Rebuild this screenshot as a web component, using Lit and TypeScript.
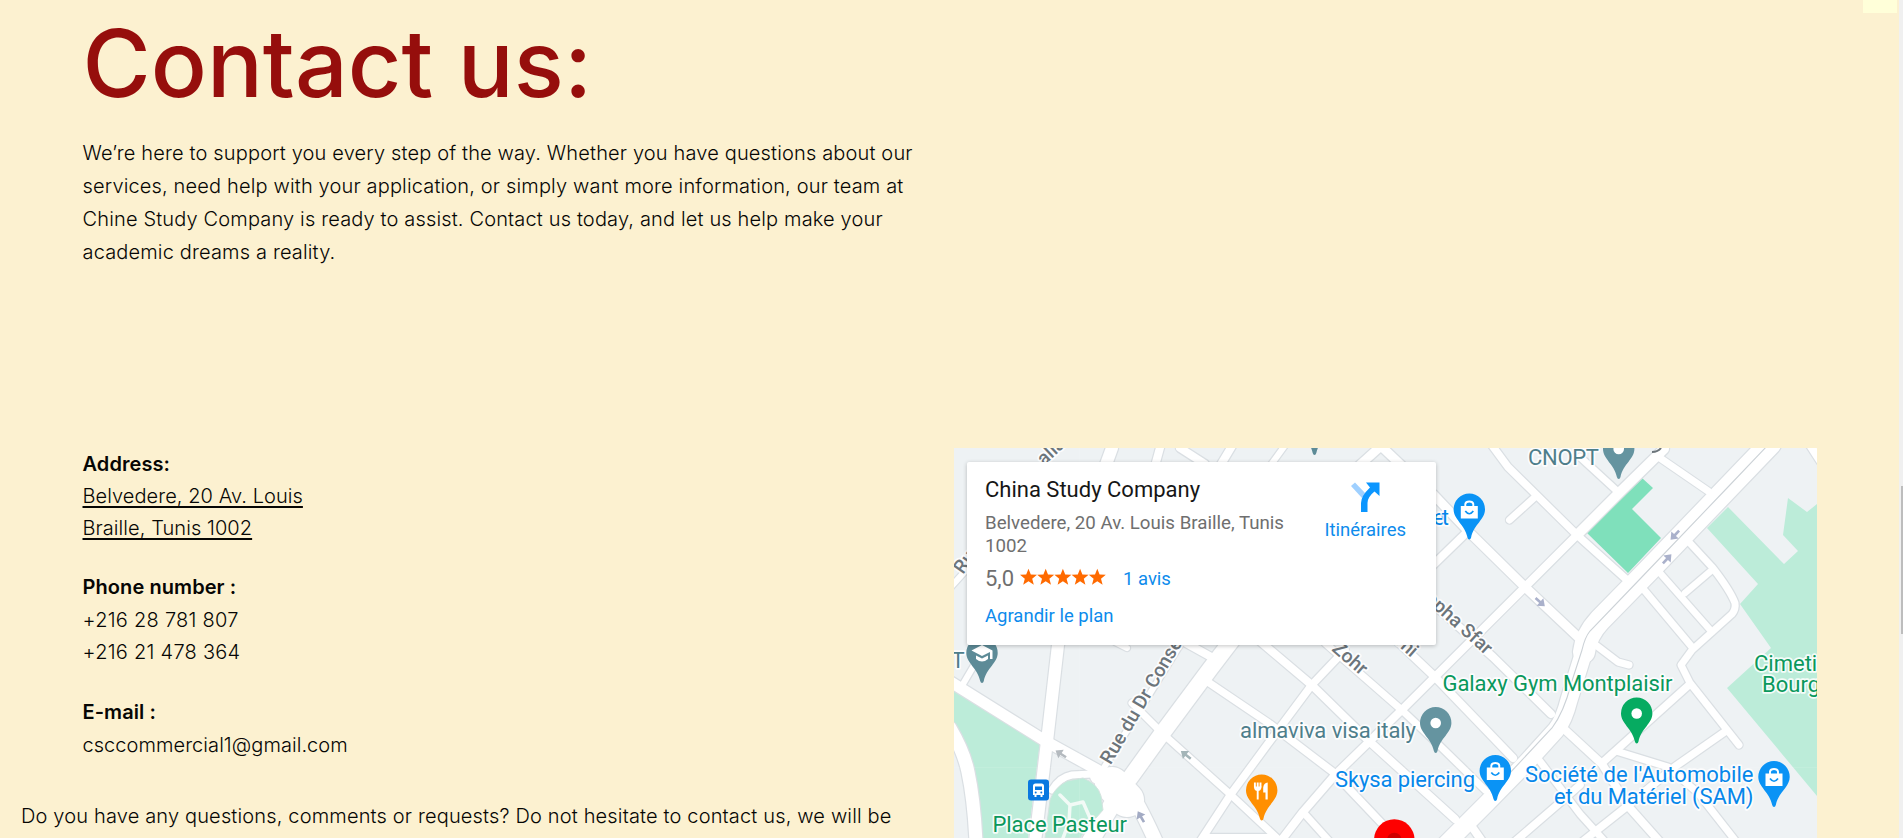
import { LitElement, html, svg, css } from "lit";
import { customElement } from "lit/decorators.js";

type Road = [d: string, width: number];

const ROADS: Road[] = [
  ["M950 681.500L1047 742L1112 778", 11],
  ["M1112 448L1104 470L1058 645L1047.500 737L1035 842", 12],
  ["M950 728Q964 752 968 772Q974 800 976 842", 13],
  ["M1052 790Q1060 777 1072 775L1092 774", 7],
  ["M1098 776L1118 784Q1124 786 1130 778L1161.700 734L1210 669L1236 635", 16],
  ["M1112 784L1127 800", 34],
  ["M1128 790Q1136 798 1156 842", 14],
  ["M1118 795L1107 813L1090 842", 17],
  ["M1100 774L1180 645", 6],
  ["M1132 703L1162 733L1231 795L1277 838", 7],
  ["M1201 840L1231 794L1270 741L1311.700 685L1345 650", 7.500],
  ["M1205 680L1270 724L1333 772L1390 832", 7.500],
  ["M1255 637L1311.700 685L1370 742L1455 819", 8],
  ["M1325 643L1401.700 710L1440 746L1485 790", 7],
  ["M1395 639L1435 677L1513 758", 8],
  ["M1440 610L1493 657L1551 714", 8],
  ["M1280 842L1303 812L1335 775L1401.700 710L1525 587L1577 535", 8],
  ["M1577 535L1620 492L1664 449", 10],
  ["M1303 812L1330 842", 7],
  ["M1446 844L1487 803L1527 762L1556 730Q1564 720 1569 700L1586 645", 17],
  ["M1584 652Q1586 635 1600 620L1648 571L1770 444", 22],
  ["M1491 444L1508 467L1577 535L1627 580", 7.500],
  ["M1509.500 520L1535 497", 7],
  ["M1433 494L1470 533L1525 587L1578 637", 9],
  ["M1430 568L1465 534", 8],
  ["M1580 457L1617 491", 7],
  ["M1645 591L1692 647", 7],
  ["M1660 573L1712 632", 6.500],
  ["M1688 541L1712 567Q1730 590 1735 603Q1736 609 1732 614L1692 650L1681 665L1690 683L1739 745", 7],
  ["M1685 593L1712 570", 6.500],
  ["M1660 458L1708 491", 7],
  ["M1808 442L1821 462", 8],
  ["M1597 646L1618 662L1629 665", 7],
  ["M1690 684L1602 763", 7.500],
  ["M1563 728L1602 764L1628 806L1660 842", 8],
  ["M1616 751L1668 767L1698 793L1738 844", 7],
  ["M1726 731L1673 768L1630 804L1582 842", 7.500],
  ["M1536 756L1580 814L1607 844", 7],
  ["M1512 844L1563 800L1580 785", 7.500],
  ["M1470 824L1484 844", 8],
  ["M976 662L963 684", 6],
  ["M1186 643L1213 658", 8],
  ["M1115 642L1127 648", 6],
  ["M1161 444L1155 466", 8],
  ["M1180 448L1205 464", 8],
  ["M1232 446L1220 466", 8],
  ["M1286 444L1270 466", 6],
  ["M1352 472L1381 446L1402 466", 9],
  ["M950 588L968 568", 6],
  ["M1203 836L1272 836", 4],
];

type Label = { x: number; y: number; w?: number; text: string; tone: string };

const LABELS: Label[] = [
  { x: 1528, y: 465, w: 71, text: "CNOPT", tone: "slate" },
  { x: 1433, y: 525, w: 16, text: "et", tone: "blue" },
  { x: 951.500, y: 668, text: "T", tone: "slate" },
  { x: 1442.500, y: 691, w: 230, text: "Galaxy Gym Montplaisir", tone: "green" },
  { x: 1240, y: 737.500, w: 176, text: "almaviva visa italy", tone: "slate" },
  { x: 1335, y: 786.500, w: 140, text: "Skysa piercing", tone: "blue" },
  { x: 1525, y: 781.500, w: 228.500, text: "Société de l'Automobile", tone: "blue" },
  { x: 1554, y: 803.500, w: 199.500, text: "et du Matériel (SAM)", tone: "blue" },
  { x: 992.500, y: 831.500, w: 134.500, text: "Place Pasteur", tone: "green" },
  { x: 1754, y: 670.500, text: "Cimetière", tone: "green" },
  { x: 1762, y: 692, text: "Bourgel", tone: "green" },
];

const STREETS: [x: number, y: number, angle: number, text: string][] = [
  [1110.500, 765.500, -59.500, "Rue du Dr Conseil"],
  [963, 575, -55, "Rue"],
  [1044, 466, -43, "allah"],
  [1331, 650, 41, "Zohr"],
  [1387, 636, 42, "erni"],
  [1424, 600, 42, "opha Sfar"],
];

const BAG = svg`<path d="M-8.500 -3.500H8.500V9H-8.500Z" fill="#fff"/><path d="M-4 -3V-5.500Q-3.500 -8 0 -8Q3.500 -8 4 -5.500V-3" fill="none" stroke="#fff" stroke-width="1.900"/><path d="M-4 1.500Q0 7 4 1.500" fill="none" stroke="#0a93f5" stroke-width="1.700"/>`;
const DOT = svg`<circle r="5.300" fill="#fff"/>`;
const CAP = svg`<path d="M-10.500 -2.500L0 -8L10.500 -2.500V6H8V-1L0 3Z" fill="#fff"/><path d="M-6 2.500L0 5.500L6 2.500V6Q0 11 -6 6Z" fill="#fff"/>`;
const FOOD = svg`<path d="M-6.800 -8V-3M-4 -8V-3M-1.200 -8V-3M-4 -2V9" stroke="#fff" stroke-width="1.900" fill="none"/><path d="M-7.700 -4H-0.300Q-0.300 0.500 -4 0.500Q-7.700 0.500 -7.700 -4Z" fill="#fff"/><path d="M6 -8V9H3.800V2H1.500V-3Q2 -7.500 6 -8Z" fill="#fff"/>`;

const PINS: [x: number, y: number, fill: string, glyph: unknown][] = [
  [1314.500, 425, "#5d8b97", DOT],
  [982, 653, "#5d8b97", CAP],
  [1618.700, 449, "#6594a0", DOT],
  [1469.300, 509.500, "#0a93f5", BAG],
  [1435.700, 723, "#6594a0", DOT],
  [1636.700, 713.500, "#06ab61", DOT],
  [1495.300, 771, "#0a93f5", BAG],
  [1774, 777, "#0a93f5", BAG],
  [1261.700, 790.500, "#ff8f00", FOOD],
];

const ARROWS: [x: number, y: number, angle: number, fill: string][] = [
  [1061, 754, 213, "#b4babf"],
  [1186, 755, 218, "#a4b5b8"],
  [1141, 817, 240, "#a3abc4"],
  [1540, 602, 42, "#aab1cb"],
  [1675, 535, 133, "#aab1cb"],
  [1667, 559, -47, "#aab1cb"],
];

@customElement("city-map")
export class CityMap extends LitElement {
  static styles = css`
    :host { display: block; }
    .map { display: block; width: 863px; height: 390px; font-family: Roboto, sans-serif; }
    .casing, .surface { fill: none; stroke-linejoin: round; stroke-linecap: round; }
    .casing { stroke: #dadfe3; }
    .surface { stroke: #fff; }
    .label { font-size: 22px; font-weight: 400; paint-order: stroke; stroke: #fff; stroke-width: 3.500px; stroke-linejoin: round; stroke-opacity: 0.850; }
    .street { fill: #6c757b; font-size: 19.200px; font-weight: 500; }
    .slate { fill: #4e7e8b; }
    .blue { fill: #0687ea; }
    .green { fill: #0a985c; }
  `;

  render() {
    return html`
      <svg class="map" viewBox="954 448 863 390">
        <rect x="954" y="448" width="863" height="390" fill="#eef2f4" />
        <path d="M954 690L1040 743L1037 767L1028 838H982L978 800L972 765L954 725Z" fill="#bcecd9" />
        <path d="M1728 507L1784 564L1798 551L1783 535L1788 498L1807 512L1817 504V796L1727 688L1771 648L1740 604L1758 584L1707 528Z" fill="#bcecd9" />
        <path d="M1642 478L1653 488L1632 509L1661 538L1628 573L1587 533Z" fill="#7fe0bb" />
        ${ROADS.map(([d, w]) => svg`<path class="casing" d=${d} stroke-width=${w + 2.4}></path>`)}
        ${ROADS.map(([d, w]) => svg`<path class="surface" d=${d} stroke-width=${w}></path>`)}
        <path d="M1045 838L1050 800Q1054 788 1067 781L1083 778Q1098 784 1101 796L1103 810L1088 827L1080 838Z" fill="#bcecd9" stroke="#d4e3df" />
        <path d="M1060 795L1070 805L1083 802L1090 818M1070 805L1069 822L1063 838" fill="none" stroke="#f2faf6" stroke-width="3.500" stroke-linecap="round" stroke-linejoin="round" />
        <path d="M1768 445L1728 487L1640 579L1590 631Q1585 637 1582 650L1571 684Q1564 712 1552 728L1508 775" fill="none" stroke="#ccd2d7" stroke-width="1.100" />
        <path d="M954 767.500H1817M1079.500 448V838M1480 448V838" stroke="#fff" stroke-opacity="0.100" />
        <path d="M1652 452Q1658 452 1661 448" fill="none" stroke="#6c757b" stroke-width="2" />
        ${ARROWS.map(([x, y, a, fill]) => svg`<path transform="translate(${x} ${y}) rotate(${a})" d="M-6 -1.300H0V-5L6.500 0L0 5V1.300H-6Z" fill=${fill}></path>`)}
        ${STREETS.map(([x, y, a, text]) => svg`<text class="label street" transform="translate(${x} ${y}) rotate(${a})">${text}</text>`)}
        ${LABELS.map((l) =>
          l.w
            ? svg`<text class="label ${l.tone}" x=${l.x} y=${l.y} textLength=${l.w}>${l.text}</text>`
            : svg`<text class="label ${l.tone}" x=${l.x} y=${l.y}>${l.text}</text>`
        )}
        ${PINS.map(
          ([x, y, fill, glyph]) => svg`<g transform="translate(${x} ${y})">
            <path d="M0 -16A15.700 15.700 0 0 1 15.700 0C15.700 10 4.500 15 1.800 28Q1.300 30 0 30Q-1.300 30 -1.800 28C-4.500 15 -15.700 10 -15.700 0A15.700 15.700 0 0 1 0 -16Z" fill=${fill}></path>${glyph}</g>`
        )}
        <g transform="translate(1038.500 790)">
          <rect x="-10.500" y="-10.500" width="21" height="21" rx="3" fill="#0a78e0" />
          <path d="M-5.500 5V-4Q-5.500 -6.500 -3 -6.500H3Q5.500 -6.500 5.500 -4V5H4V7H2V5H-2V7H-4V5Z" fill="#fff" />
          <path d="M-3.500 -3.500H3.500V0H-3.500Z" fill="#0a78e0" />
          <circle cx="-2.800" cy="2.600" r="1" fill="#0a78e0" />
          <circle cx="2.800" cy="2.600" r="1" fill="#0a78e0" />
        </g>
        <circle cx="1394.300" cy="839.500" r="20.200" fill="#fe0000" />
        <circle cx="1394.300" cy="840" r="7.300" fill="#cf0000" />
      </svg>
    `;
  }
}

@customElement("place-card")
export class PlaceCard extends LitElement {
  static styles = css`
    :host { display: block; box-sizing: border-box; width: 469px; height: 183px; padding: 14px 30px 0 18px; background: #fff; border-radius: 2px; box-shadow: 0 1px 4px rgba(0, 0, 0, 0.240); font-family: Roboto, sans-serif; font-weight: 400; color: #6f6f6f; }
    .row { display: flex; justify-content: space-between; white-space: nowrap; }
    .name { font-size: 22px; line-height: 28px; color: #161616; }
    .addr { margin-top: 8px; font-size: 18.700px; line-height: 22.500px; }
    .rating { display: flex; align-items: center; margin-top: 8px; height: 26px; }
    .score { font-size: 22px; width: 34px; }
    .stars { display: block; width: 88px; height: 20px; margin-top: -2px; }
    .link { color: #0d8bec; font-size: 18.500px; }
    .reviews { margin-left: 16px; margin-top: 2px; }
    .more { margin-top: 12px; line-height: 26px; }
    .route { display: flex; flex-direction: column; align-items: center; padding-top: 6px; }
    .turn { display: block; width: 30px; height: 30px; }
    .route .link { margin-top: 6px; line-height: 24px; }
  `;

  render() {
    const star = "M0 -8.800L2.300 -3L8.500 -2.700L3.700 1.200L5.300 7.200L0 3.800L-5.300 7.200L-3.700 1.200L-8.500 -2.700L-2.300 -3Z";
    return html`
      <div class="row">
        <div>
          <div class="name">China Study Company</div>
          <div class="addr">Belvedere, 20 Av. Louis Braille, Tunis<br />1002</div>
        </div>
        <div class="route">
          <svg class="turn" viewBox="0 0 30 30">
            <path d="M1 4L5 0.500L15.500 11.500L12 16Z" fill="#9fd0ff" />
            <path d="M16 0.500H29.500V14L24.500 9.500Q17.500 15 17.500 21V30H11V21Q11 14 20 5.500Z" fill="#0b96ff" />
          </svg>
          <span class="link">Itinéraires</span>
        </div>
      </div>
      <div class="rating">
        <span class="score">5,0</span>
        <svg class="stars" viewBox="0 0 88 20">
          ${[0, 1, 2, 3, 4].map((i) => svg`<path transform="translate(${9.5 + i * 17.2} 10.500)" d=${star} fill="#ff6a00"></path>`)}
        </svg>
        <span class="link reviews">1 avis</span>
      </div>
      <div class="link more">Agrandir le plan</div>
    `;
  }
}

@customElement("app-root")
export class AppRoot extends LitElement {
  static styles = css`
    :host { display: flex; box-sizing: border-box; width: 100%; height: 838px; overflow: hidden; background: #fcf1d0; color: #060604; font-family: Inter, sans-serif; font-size: 20px; font-weight: 300; }
    .page { flex: 1; display: grid; grid-template-columns: 954px 1fr; grid-template-rows: 448px 390px; position: relative; white-space: nowrap; }
    .intro { padding-left: 82.500px; }
    .title { margin: 0; padding-top: 6px; font-size: 93px; line-height: 115px; font-weight: 500; color: #960e0c; }
    .lead { margin: 0; padding-top: 15.500px; line-height: 33px; letter-spacing: 0.155px; }
    .details { grid-row: 2; padding-left: 82.500px; line-height: 32.500px; }
    .block { height: 125px; }
    .block:first-child { height: 123px; line-height: 32px; }
    .strong { font-weight: 600; letter-spacing: 0.080px; }
    .addr { text-decoration: underline; text-underline-offset: 3px; text-decoration-thickness: 1.500px; letter-spacing: 0.070px; color: inherit; }
    .phone { letter-spacing: 0.260px; }
    .mail { letter-spacing: 0.060px; }
    .prompt { margin: -21px 0 0 -61.500px; letter-spacing: 0.160px; }
    .map-box { grid-row: 2; grid-column: 2; position: relative; }
    .card { position: absolute; left: 13px; top: 14px; }
    .chip { position: absolute; right: 2px; top: 0; width: 34px; height: 13px; background: #ffffd9; }
    .scroll { width: 4px; background: #f0f0f0; display: flex; flex-direction: column; align-items: flex-end; }
    .thumb { width: 2px; height: 148px; margin-top: 486px; background: #bdbdbd; }
  `;

  render() {
    return html`
      <main class="page">
        <section class="intro">
          <h1 class="title">Contact us:</h1>
          <p class="lead">
            We’re here to support you every step of the way. Whether you have questions about our<br />services, need help with
            your application, or simply want more information, our team at<br />Chine Study Company is ready to assist. Contact us
            today, and let us help make your<br />academic dreams a reality.
          </p>
        </section>
        <section class="details">
          <div class="block"><div class="strong">Address:</div><a class="addr">Belvedere, 20 Av. Louis<br />Braille, Tunis 1002</a></div>
          <div class="block"><div class="strong">Phone number :</div><div class="phone">+216 28 781 807<br />+216 21 478 364</div></div>
          <div class="block"><div class="strong">E-mail :</div><div class="mail">csccommercial1@gmail.com</div></div>
          <div class="prompt">Do you have any questions, comments or requests? Do not hesitate to contact us, we will be</div>
        </section>
        <div class="map-box">
          <city-map></city-map>
          <place-card class="card"></place-card>
        </div>
        <div class="chip"></div>
      </main>
      <div class="scroll"><div class="thumb"></div></div>
    `;
  }
}
